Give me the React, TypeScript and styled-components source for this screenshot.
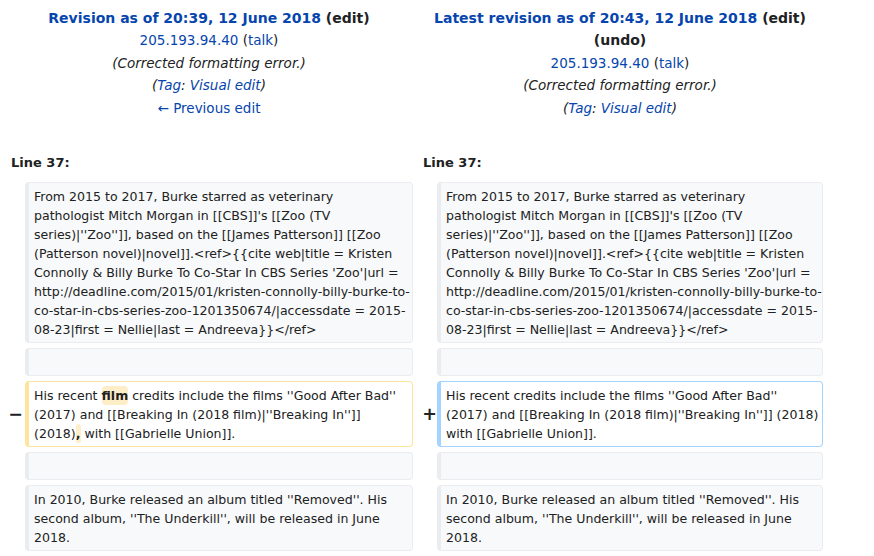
import React from "react";
import styled, { createGlobalStyle } from "styled-components";

const Global = createGlobalStyle`
  html, body { margin: 0; padding: 0; background: #ffffff; }
  body {
    font-family: "DejaVu Sans", "Liberation Sans", sans-serif;
    color: #202122;
    font-size: 14px;
  }
`;

const Diff = styled.div`
  display: flex;
  flex-direction: column;
  padding: 7px 0 0 5px;
  width: 818px;
`;

const Row = styled.div<{ $top?: boolean; $mt?: number }>`
  display: grid;
  grid-template-columns: 16px 388px 16px 386px;
  column-gap: 4px;
  align-items: ${(p) => (p.$top ? "start" : "center")};
  margin-top: ${(p) => p.$mt ?? 0}px;
`;

const Title = styled.div`
  grid-column: span 2;
  text-align: center;
  line-height: 22.4px;
`;

const TitleMain = styled.div`
  font-size: 14px;
  font-weight: bold;
`;

const TitleSub = styled.div<{ $italic?: boolean }>`
  font-size: 13.5px;
  font-style: ${(p) => (p.$italic ? "italic" : "normal")};
`;

const Link = styled.a`
  color: #0645ad;
  text-decoration: none;
`;

const Dark = styled.span`
  color: #202122;
`;

const LineNo = styled.div`
  grid-column: span 2;
  font-size: 13px;
  font-weight: bold;
  line-height: 20px;
  padding-left: 6px;
`;

const Marker = styled.div<{ $shift: number }>`
  font-size: 17.5px;
  font-weight: bold;
  line-height: 1.2;
  text-align: right;
  margin-right: ${(p) => -p.$shift}px;
  color: #202122;
`;

type Kind = "context" | "deleted" | "added";

const borderColor: Record<Kind, string> = {
  context: "#eaecf0",
  deleted: "#ffe49c",
  added: "#a3d3ff",
};

const Box = styled.div<{ $kind: Kind }>`
  font-size: 12.55px;
  line-height: 19px;
  padding: 3.5px 5px;
  border: 1px solid ${(p) => borderColor[p.$kind]};
  border-left-width: 4px;
  border-radius: 4px;
  background: ${(p) => (p.$kind === "context" ? "#f8f9fa" : "#ffffff")};
  color: #202122;
`;

const Line = styled.div`
  white-space: pre;
`;

const Change = styled.span`
  font-weight: bold;
  background: #feeec8;
  border-radius: 4px;
  padding: 2px 0;
`;

const Cell = styled.div``;

const para1 = [
  "From 2015 to 2017, Burke starred as veterinary",
  "pathologist Mitch Morgan in [[CBS]]'s [[Zoo (TV",
  "series)|''Zoo'']], based on the [[James Patterson]] [[Zoo",
  "(Patterson novel)|novel]].<ref>{{cite web|title = Kristen",
  "Connolly & Billy Burke To Co-Star In CBS Series 'Zoo'|url =",
  "http://deadline.com/2015/01/kristen-connolly-billy-burke-to-",
  "co-star-in-cbs-series-zoo-1201350674/|accessdate = 2015-",
  "08-23|first = Nellie|last = Andreeva}}</ref>",
];

const para3 = [
  "In 2010, Burke released an album titled ''Removed''. His",
  "second album, ''The Underkill'', will be released in June",
  "2018.",
];

const deleted: React.ReactNode[] = [
  <>
    His recent <Change>film</Change> credits include the films ''Good After Bad''
  </>,
  "(2017) and [[Breaking In (2018 film)|''Breaking In'']]",
  <>
    (2018)<Change>,</Change> with [[Gabrielle Union]].
  </>,
];

const added = [
  "His recent credits include the films ''Good After Bad''",
  "(2017) and [[Breaking In (2018 film)|''Breaking In'']] (2018)",
  "with [[Gabrielle Union]].",
];

const Lines: React.FC<{ lines: React.ReactNode[] }> = ({ lines }) => (
  <>
    {lines.map((l, i) => (
      <Line key={i}>{l}</Line>
    ))}
  </>
);

const ContextRow: React.FC<{ lines: React.ReactNode[]; mt: number }> = ({ lines, mt }) => (
  <Row $mt={mt}>
    <Cell />
    <Box $kind="context">
      <Lines lines={lines} />
    </Box>
    <Cell />
    <Box $kind="context">
      <Lines lines={lines} />
    </Box>
  </Row>
);

export default function App() {
  return (
    <>
      <Global />
      <Diff>
        <Row $top>
          <Title>
            <TitleMain>
              <Link>Revision as of 20:39, 12 June 2018</Link> <Dark>(edit)</Dark>
            </TitleMain>
            <TitleSub>
              <Link>205.193.94.40</Link> <Dark>(</Dark>
              <Link>talk</Link>
              <Dark>)</Dark>
            </TitleSub>
            <TitleSub $italic>(Corrected formatting error.)</TitleSub>
            <TitleSub $italic>
              <Dark>(</Dark>
              <Link>Tag</Link>
              <Dark>: </Dark>
              <Link>Visual edit</Link>
              <Dark>)</Dark>
            </TitleSub>
            <TitleSub>
              <Link>← Previous edit</Link>
            </TitleSub>
          </Title>
          <Title>
            <TitleMain>
              <Link>Latest revision as of 20:43, 12 June 2018</Link> <Dark>(edit)</Dark>{" "}
              <Dark>(undo)</Dark>
            </TitleMain>
            <TitleSub>
              <Link>205.193.94.40</Link> <Dark>(</Dark>
              <Link>talk</Link>
              <Dark>)</Dark>
            </TitleSub>
            <TitleSub $italic>(Corrected formatting error.)</TitleSub>
            <TitleSub $italic>
              <Dark>(</Dark>
              <Link>Tag</Link>
              <Dark>: </Dark>
              <Link>Visual edit</Link>
              <Dark>)</Dark>
            </TitleSub>
          </Title>
        </Row>

        <Row $mt={34}>
          <LineNo>Line 37:</LineNo>
          <LineNo>Line 37:</LineNo>
        </Row>

        <ContextRow lines={para1} mt={9} />
        <ContextRow lines={["\u00a0"]} mt={5} />

        <Row $mt={5}>
          <Marker $shift={2}>−</Marker>
          <Box $kind="deleted">
            <Lines lines={deleted} />
          </Box>
          <Marker $shift={4}>+</Marker>
          <Box $kind="added">
            <Lines lines={added} />
          </Box>
        </Row>

        <ContextRow lines={["\u00a0"]} mt={5} />
        <ContextRow lines={para3} mt={5} />
      </Diff>
    </>
  );
}
